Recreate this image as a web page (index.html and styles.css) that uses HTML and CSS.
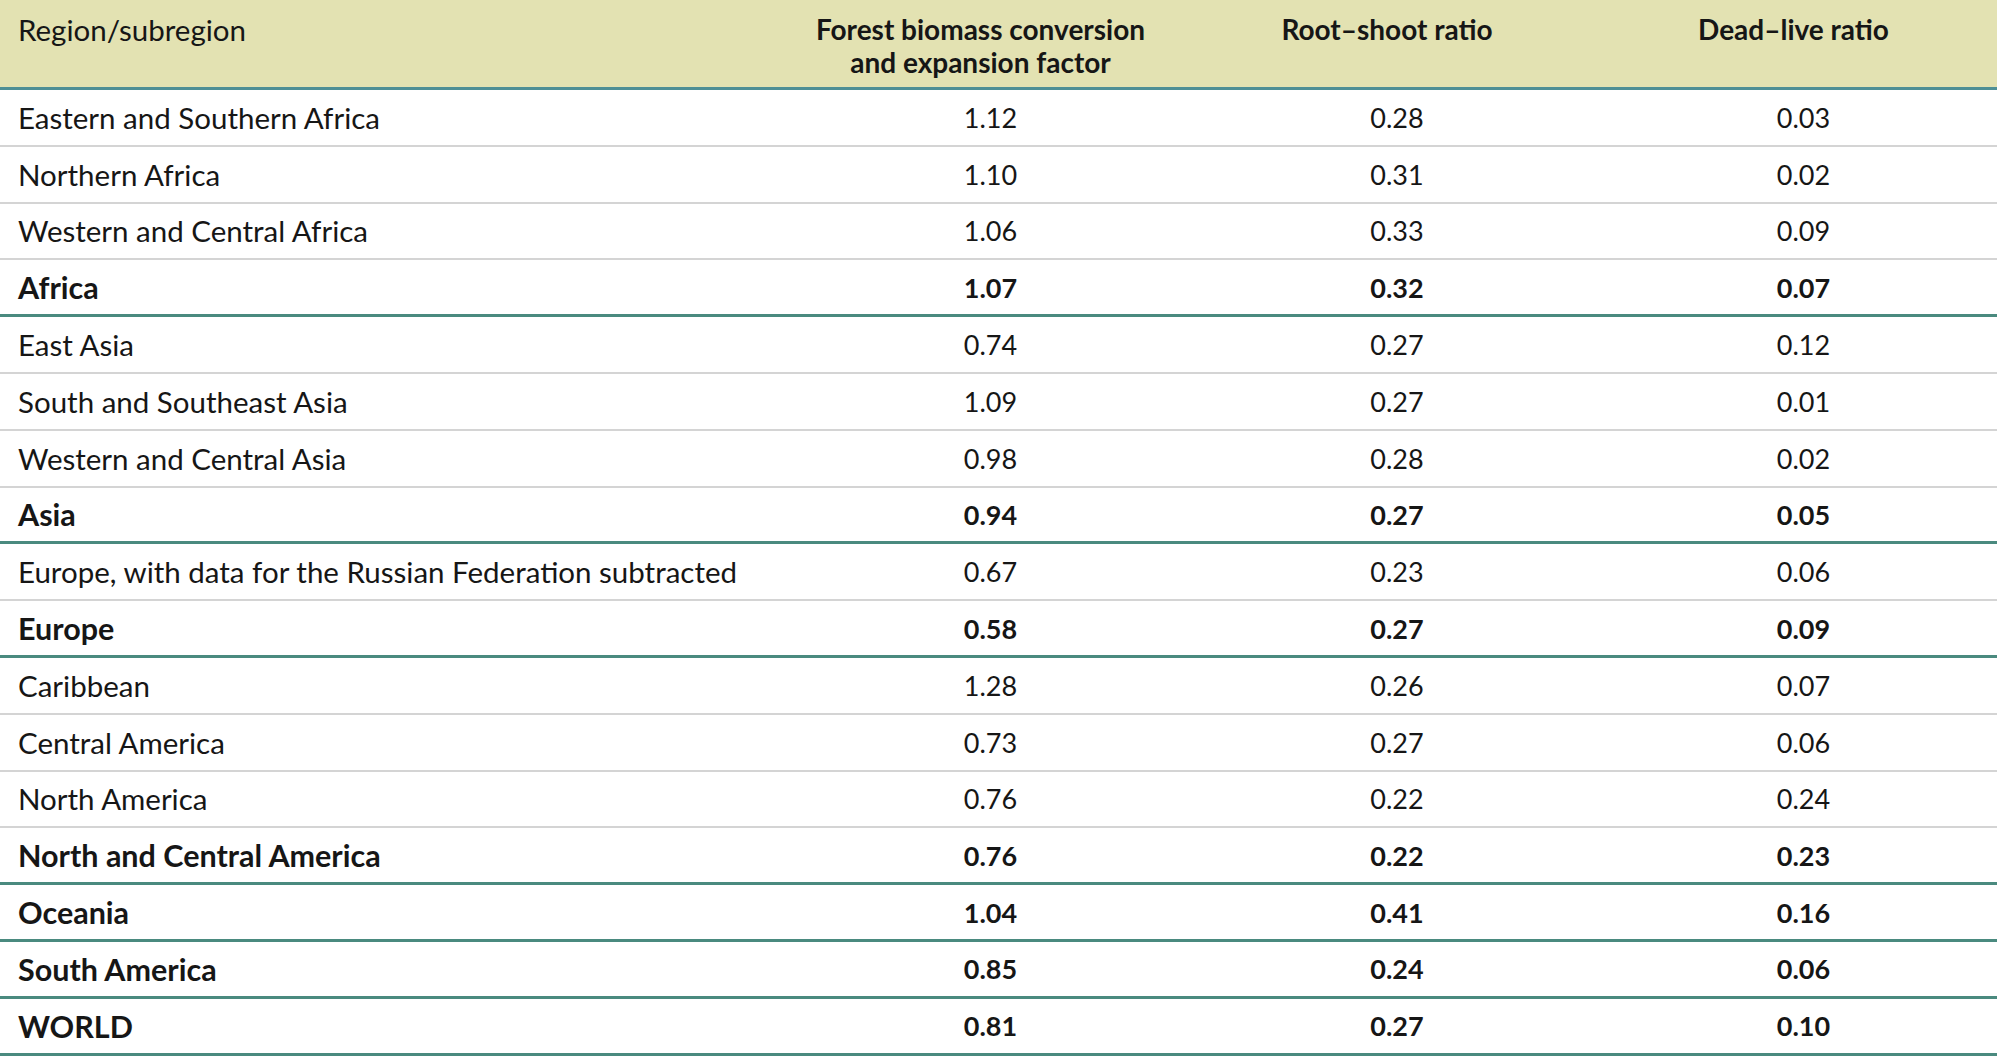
FILE: index.html
```html
<!DOCTYPE html>
<html lang="en">
<head>
<meta charset="utf-8">
<title>Biomass factors by region</title>
<link rel="stylesheet" href="styles.css">
</head>
<body>
<div class="table">
  <div class="row head">
    <div class="cell name">Region/subregion</div>
    <div class="cell hc">Forest biomass conversion<br>and expansion factor</div>
    <div class="cell hc">Root–shoot ratio</div>
    <div class="cell hc">Dead–live ratio</div>
  </div>
  <div class="row sub"><div class="cell name">Eastern and Southern Africa</div><div class="cell num">1.12</div><div class="cell num">0.28</div><div class="cell num">0.03</div></div>
  <div class="row sub"><div class="cell name">Northern Africa</div><div class="cell num">1.10</div><div class="cell num">0.31</div><div class="cell num">0.02</div></div>
  <div class="row sub"><div class="cell name">Western and Central Africa</div><div class="cell num">1.06</div><div class="cell num">0.33</div><div class="cell num">0.09</div></div>
  <div class="row total"><div class="cell name">Africa</div><div class="cell num">1.07</div><div class="cell num">0.32</div><div class="cell num">0.07</div></div>
  <div class="row sub"><div class="cell name">East Asia</div><div class="cell num">0.74</div><div class="cell num">0.27</div><div class="cell num">0.12</div></div>
  <div class="row sub"><div class="cell name">South and Southeast Asia</div><div class="cell num">1.09</div><div class="cell num">0.27</div><div class="cell num">0.01</div></div>
  <div class="row sub"><div class="cell name">Western and Central Asia</div><div class="cell num">0.98</div><div class="cell num">0.28</div><div class="cell num">0.02</div></div>
  <div class="row total"><div class="cell name">Asia</div><div class="cell num">0.94</div><div class="cell num">0.27</div><div class="cell num">0.05</div></div>
  <div class="row sub"><div class="cell name">Europe, with data for the Russian Federation subtracted</div><div class="cell num">0.67</div><div class="cell num">0.23</div><div class="cell num">0.06</div></div>
  <div class="row total"><div class="cell name">Europe</div><div class="cell num">0.58</div><div class="cell num">0.27</div><div class="cell num">0.09</div></div>
  <div class="row sub"><div class="cell name">Caribbean</div><div class="cell num">1.28</div><div class="cell num">0.26</div><div class="cell num">0.07</div></div>
  <div class="row sub"><div class="cell name">Central America</div><div class="cell num">0.73</div><div class="cell num">0.27</div><div class="cell num">0.06</div></div>
  <div class="row sub"><div class="cell name">North America</div><div class="cell num">0.76</div><div class="cell num">0.22</div><div class="cell num">0.24</div></div>
  <div class="row total"><div class="cell name">North and Central America</div><div class="cell num">0.76</div><div class="cell num">0.22</div><div class="cell num">0.23</div></div>
  <div class="row total"><div class="cell name">Oceania</div><div class="cell num">1.04</div><div class="cell num">0.41</div><div class="cell num">0.16</div></div>
  <div class="row total"><div class="cell name">South America</div><div class="cell num">0.85</div><div class="cell num">0.24</div><div class="cell num">0.06</div></div>
  <div class="row total"><div class="cell name">WORLD</div><div class="cell num">0.81</div><div class="cell num">0.27</div><div class="cell num">0.10</div></div>
</div>
</body>
</html>
```

FILE: styles.css
```css
* { box-sizing: border-box; }

html, body {
  margin: 0;
  padding: 0;
  background: #ffffff;
}

body {
  font-family: "Lato", "Open Sans", "Liberation Sans", sans-serif;
  font-size: 27px;
  color: #161616;
}

.table {
  width: 1997px;
  display: flex;
  flex-direction: column;
}

.row {
  display: grid;
  grid-template-columns: 777px 407px 406px 407px;
  align-items: center;
  height: 56.8px;
}

.head {
  height: 90px;
  align-items: start;
  background: #e3e2b2;
  border-bottom: 3px solid #4e8f95;
  font-weight: 700;
  line-height: 33px;
  padding-top: 13px;
}

.head .name {
  font-weight: 400;
}

.head .hc {
  font-size: 28px;
}

.sub {
  border-bottom: 2px solid #d4d4d4;
}

.total {
  border-bottom: 3px solid #4a8a7f;
  font-weight: 700;
}

.cell.name {
  padding-left: 18px;
  white-space: nowrap;
  font-size: 29.5px;
}

.total .cell.name {
  font-size: 30.5px;
}

.cell.hc {
  text-align: center;
}

.cell.num {
  text-align: center;
  padding-left: 20px;
}
```
